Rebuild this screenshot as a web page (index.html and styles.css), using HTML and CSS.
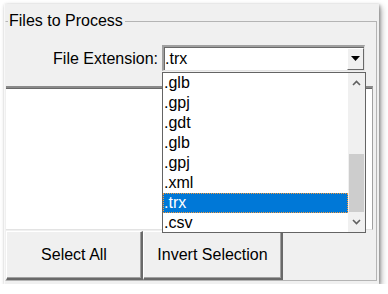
FILE: index.html
```html
<!DOCTYPE html>
<html>
<head>
<meta charset="utf-8">
<link rel="stylesheet" href="styles.css">
</head>
<body>
<div class="window">
  <fieldset class="group">
    <legend class="group-title">Files to Process</legend>
    <div class="ext-row">
      <label class="ext-label">File Extension:</label>
      <div class="combo">
        <span class="combo-value">.trx</span>
        <span class="combo-btn">
          <svg width="9" height="5" viewBox="0 0 9 5"><path d="M0 0H9L4.5 5Z" fill="#000"/></svg>
        </span>
        <div class="dropdown">
          <ul class="items">
            <li>.glb</li>
            <li>.gpj</li>
            <li>.gdt</li>
            <li>.glb</li>
            <li>.gpj</li>
            <li>.xml</li>
            <li class="selected">.trx</li>
            <li>.csv</li>
          </ul>
          <div class="scrollbar">
            <span class="arrow">
              <svg width="9" height="6" viewBox="0 0 9 6"><path d="M1 5L4.5 1.5L8 5" fill="none" stroke="#606060" stroke-width="1.6"/></svg>
            </span>
            <span class="track"><span class="thumb"></span></span>
            <span class="arrow">
              <svg width="9" height="6" viewBox="0 0 9 6"><path d="M1 1L4.5 4.5L8 1" fill="none" stroke="#606060" stroke-width="1.6"/></svg>
            </span>
          </div>
        </div>
      </div>
    </div>
    <div class="listview"></div>
    <div class="buttons">
      <button class="btn btn-all">Select All</button>
      <button class="btn btn-invert">Invert Selection</button>
    </div>
  </fieldset>
</div>
</body>
</html>
```

FILE: styles.css
```css
html, body {
  margin: 0;
  padding: 0;
  background: #ffffff;
}
body {
  font-family: "Liberation Sans", Arial, sans-serif;
  font-size: 16px;
  color: #000;
}
.window {
  margin: 4px 0 0 4px;
  width: 375px;
  height: 280px;
  box-sizing: border-box;
  background: #f0f0f0;
  border-left: 1px solid #f8f8f8;
  box-shadow: 1px 1px 3px rgba(0,0,0,0.35), 3px 3px 6px rgba(0,0,0,0.25);
  padding: 8px 2px 3px 0;
  display: flex;
}
.group {
  margin: 0;
  flex: 1;
  border: 1px solid #b4b4b4;
  border-left-color: transparent;
  padding: 0;
  display: flex;
  flex-direction: column;
  min-width: 0;
}
.group-title {
  margin-left: 2px;
  padding: 0 2px 0 1px;
  line-height: 18px;
  font-size: 16px;
}
.ext-row {
  margin-top: 14px;
  display: flex;
  justify-content: flex-end;
  align-items: center;
  gap: 4px;
  padding-right: 11px;
}
.ext-label {
  font-size: 16px;
  line-height: 26px;
  padding-top: 2px;
}
.combo {
  position: relative;
  width: 203px;
  height: 26px;
  box-sizing: border-box;
  background: #fff;
  border-top: 2px solid #a0a0a0;
  border-left: 2px solid #a0a0a0;
  border-right: 1px solid #e3e3e3;
  border-bottom: 1px solid #e3e3e3;
  box-shadow: inset 1px 1px 0 #696969;
  display: flex;
  align-items: center;
}
.combo-value {
  flex: 1;
  padding-left: 1px;
  line-height: 20px;
}
.combo-btn {
  width: 17px;
  height: 22px;
  box-sizing: border-box;
  background: #f0f0f0;
  border-top: 1px solid #fff;
  border-left: 1px solid #fff;
  border-right: 1px solid #696969;
  border-bottom: 1px solid #696969;
  display: flex;
  align-items: center;
  justify-content: center;
}
.dropdown {
  position: absolute;
  top: 25px;
  left: -2px;
  width: 204px;
  height: 161px;
  box-sizing: border-box;
  background: #fff;
  border: 1px solid #646464;
  display: flex;
  z-index: 5;
}
.items {
  list-style: none;
  margin: 0;
  padding: 0;
  flex: 1;
}
.items li {
  height: 20px;
  line-height: 20px;
  padding-left: 1px;
  box-sizing: border-box;
}
.items li.selected {
  background: #0078d7;
  color: #fff;
  border: 1px dotted #f59a3c;
  padding-left: 0;
  line-height: 18px;
}
.scrollbar {
  width: 17px;
  background: #f0f0f0;
  display: flex;
  flex-direction: column;
}
.arrow {
  height: 20px;
  display: flex;
  align-items: center;
  justify-content: center;
}
.track {
  flex: 1;
  display: flex;
  flex-direction: column;
  justify-content: flex-end;
  padding: 0 1px;
}
.thumb {
  height: 58px;
  background: #cdcdcd;
}
.listview {
  margin-top: 14px;
  height: 144px;
  box-sizing: border-box;
  background: #fff;
  border-top: 2px solid #8a8a8a;
  border-right: 1px solid #a0a0a0;
  border-bottom: 1px solid #e3e3e3;
  box-shadow: inset 0 1px 0 #696969;
  margin-right: 3px;
}
.buttons {
  display: flex;
  margin-top: 1px;
}
.btn {
  font-family: "Liberation Sans", Arial, sans-serif;
  font-size: 16px;
  color: #000;
  height: 49px;
  background: #f0f0f0;
  border-top: 1px solid #fff;
  border-left: 1px solid #fff;
  border-right: 2px solid #696969;
  border-bottom: 2px solid #696969;
  box-shadow: inset -1px -1px 0 #a0a0a0;
  padding: 0;
  margin: 0;
}
.btn-all {
  width: 137px;
}
.btn-invert {
  width: 140px;
}
```
